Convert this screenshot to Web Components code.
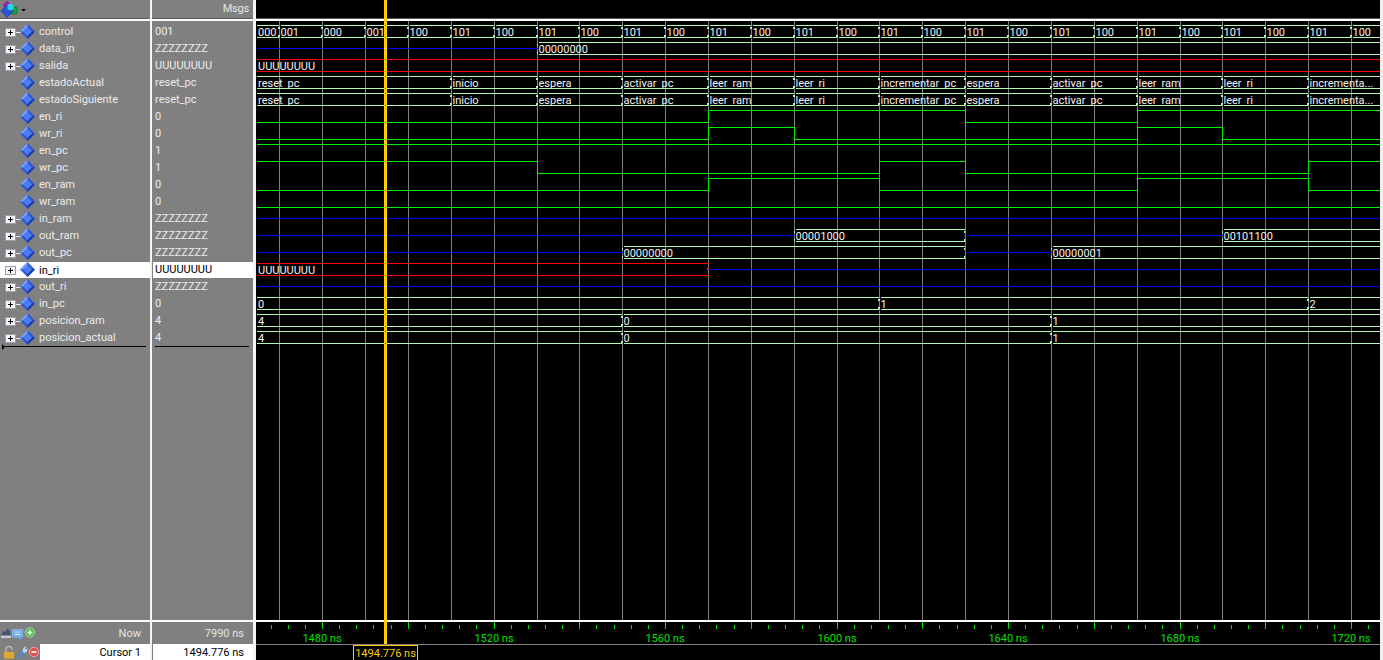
<!DOCTYPE html>
<html lang="en">
<head>
<meta charset="utf-8">
<title>Wave</title>
<style>
  html, body { margin: 0; padding: 0; height: 100%; background: #f0f0f0; overflow: hidden; }
  body { font: 11px Roboto, "Noto Sans", sans-serif; color: #ececec; }
</style>
</head>
<body>
<wave-window>
  <wave-column style="--w:150px;--rule:2px">
    <tool-icon slot="head" kind="layers"></tool-icon>
    <name-cell expandable>control</name-cell>
    <name-cell expandable>data_in</name-cell>
    <name-cell expandable>salida</name-cell>
    <name-cell>estadoActual</name-cell>
    <name-cell>estadoSiguiente</name-cell>
    <name-cell>en_ri</name-cell>
    <name-cell>wr_ri</name-cell>
    <name-cell>en_pc</name-cell>
    <name-cell>wr_pc</name-cell>
    <name-cell>en_ram</name-cell>
    <name-cell>wr_ram</name-cell>
    <name-cell expandable>in_ram</name-cell>
    <name-cell expandable>out_ram</name-cell>
    <name-cell expandable>out_pc</name-cell>
    <name-cell expandable selected>in_ri</name-cell>
    <name-cell expandable>out_ri</name-cell>
    <name-cell expandable>in_pc</name-cell>
    <name-cell expandable>posicion_ram</name-cell>
    <name-cell expandable>posicion_actual</name-cell>
    <list-end marker style="margin-left:5px;margin-right:4px"></list-end>
    <foot-row slot="foot" height="22" icons="a" >Now</foot-row>
    <foot-row slot="foot" height="16" icons="b" light>Cursor 1</foot-row>
  </wave-column>

  <wave-column style="--w:101px;--rule:3px">
    <head-label slot="head">Msgs</head-label>
    <value-cell>001</value-cell>
    <value-cell>ZZZZZZZZ</value-cell>
    <value-cell>UUUUUUUU</value-cell>
    <value-cell>reset_pc</value-cell>
    <value-cell>reset_pc</value-cell>
    <value-cell>0</value-cell>
    <value-cell>0</value-cell>
    <value-cell>1</value-cell>
    <value-cell>1</value-cell>
    <value-cell>0</value-cell>
    <value-cell>0</value-cell>
    <value-cell>ZZZZZZZZ</value-cell>
    <value-cell>ZZZZZZZZ</value-cell>
    <value-cell>ZZZZZZZZ</value-cell>
    <value-cell selected>UUUUUUUU</value-cell>
    <value-cell>ZZZZZZZZ</value-cell>
    <value-cell>0</value-cell>
    <value-cell>4</value-cell>
    <value-cell>4</value-cell>
    <list-end style="margin-left:3px;margin-right:4px"></list-end>
    <foot-row slot="foot" height="22" value>7990 ns</foot-row>
    <foot-row slot="foot" height="16" value light full>1494.776 ns</foot-row>
  </wave-column>

  <wave-column style="--w:1124px;--rule:0px;--bg:#000">
    <wave-plot></wave-plot>
    <time-axis slot="foot"></time-axis>
    <cursor-readout slot="foot">1494.776 ns</cursor-readout>
    <wave-cursor slot="overlay"></wave-cursor>
  </wave-column>
</wave-window>

<script>
const END = 1380, PX = 256, PY = 21;
const GRID = [279,322,365,408,451,494,537,579,622,665,708,751,794,837,879,922,965,1008,1051,1094,1137,1180,1222,1265,1308,1351];
const ctlXs = [256,279,322,365,408,451,494,537,579,622,665,708,751,794,837,879,922,965,1008,1051,1094,1137,1180,1222,1265,1308,1351,END];
const ctlLabels = ['000','001','000','001','100'];
for (let i = 5; i < ctlXs.length - 1; i++) ctlLabels.push(i % 2 ? '101' : '100');
const seg = (xs, labels) => xs.slice(0, -1).map((x, i) => ({ k: 'b', a: x, e: xs[i + 1], t: labels[i] }));
const st = seg([256,451,537,622,708,794,879,965,1051,1137,1222,1308,END],
  ['reset_pc','inicio','espera','activar_pc','leer_ram','leer_ri','incrementar_pc','espera','activar_pc','leer_ram','leer_ri','incrementa...']);
const Z = (a, e) => ({ k: 'z', a, e });
const U = (a, e, t) => ({ k: 'u', a, e, t });
const B = (a, e, t) => ({ k: 'b', a, e, t });
const L = (...p) => [{ k: 'l', p }];
const ROWS = [
  seg(ctlXs, ctlLabels),
  [Z(256,537), B(537,END,'00000000')],
  [U(256,END,'UUUUUUUU')],
  st, st,
  L(256,0,708,1,965,0,1137,1),
  L(256,0,708,1,794,0,1137,1,1222,0),
  L(256,1),
  L(256,1,537,0,879,1,965,0,1308,1),
  L(256,0,708,1,879,0,1137,1,1308,0),
  L(256,0),
  [Z(256,END)],
  [Z(256,794), B(794,965,'00001000'), Z(965,1222), B(1222,END,'00101100')],
  [Z(256,622), B(622,965,'00000000'), Z(965,1051), B(1051,END,'00000001')],
  [U(256,708,'UUUUUUUU'), Z(708,END)],
  [Z(256,END)],
  [B(256,879,'0'), B(879,1308,'1'), B(1308,END,'2')],
  [B(256,622,'4'), B(622,1051,'0'), B(1051,END,'1')],
  [B(256,622,'4'), B(622,1051,'0'), B(1051,END,'1')],
];
const PALE = '#b2f7b2', GREEN = '#00f000', RED = '#ff0000', BLUE = '#0000ff';
const CUR_X = 384;

function shadow(el, html) {
  const r = el.attachShadow({ mode: 'open' });
  r.innerHTML = html;
  return r;
}

class WaveWindow extends HTMLElement {
  connectedCallback() {
    if (this.shadowRoot) return;
    shadow(this, `<style>:host{display:flex;width:1383px;height:660px;background:#f0f0f0}</style><slot></slot>`);
  }
}
class WaveColumn extends HTMLElement {
  connectedCallback() {
    if (this.shadowRoot) return;
    shadow(this, `<style>
      :host{display:flex;flex-direction:column;position:relative;flex:none;box-sizing:content-box;
        width:var(--w);height:660px;border-right:var(--rule) solid #f4f4f4;background:var(--bg,#808080)}
      .head{height:18px;flex:none;border-bottom:1px solid #5a5a5a;display:flex;align-items:center}
      .rule{height:2px;flex:none;background:#fff}
      .body{flex:1;min-height:0;padding-top:2px;box-sizing:border-box;display:flex;flex-direction:column}
      .foot{height:38px;flex:none;display:flex;flex-direction:column}
    </style>
    <div class="head"><slot name="head"></slot></div><div class="rule"></div>
    <div class="body"><slot></slot></div><div class="rule"></div>
    <div class="foot"><slot name="foot"></slot></div><slot name="overlay"></slot>`);
  }
}
class ToolIcon extends HTMLElement {
  connectedCallback() {
    if (this.shadowRoot) return;
    shadow(this, `<style>:host{display:block;height:18px;width:30px}svg{display:block}</style>
    <svg width="30" height="18" viewBox="0 0 30 18">
      <path d="M7 1 L11 5 L7 9 L3 5 Z" fill="#b020c8" stroke="#7a1090" stroke-width=".6"/>
      <rect x="9" y="7" width="8" height="7" fill="#18a040" stroke="#0a6a28" stroke-width=".6"/>
      <path d="M7 5 L13 11 L7 17.5 L1 11 Z" fill="#2a55d8" stroke="#17308f" stroke-width=".6"/>
      <circle cx="10.5" cy="7" r="3.2" fill="#22d8e8"/>
      <path d="M21 9 L26 9 L23.5 11.5 Z" fill="#000"/>
    </svg>`);
  }
}
class HeadLabel extends HTMLElement {
  connectedCallback() {
    if (this.shadowRoot) return;
    shadow(this, `<style>:host{display:block;width:97px;text-align:right;color:#e6e6e6;font-size:11px;line-height:18px;letter-spacing:-.2px}</style><slot></slot>`);
  }
}
const DIAMOND = `<polygon points="27.5,1 35,8.5 27.5,16 20,8.5" fill="#2e55d6"/>
  <polygon points="27.5,1 20,8.5 23,8.5 27.5,4" fill="#7fa4f6"/>
  <polygon points="35,8.5 27.5,16 27.5,13 32,8.5" fill="#1b3aa6"/>
  <polygon points="27.5,4 32,8.5 27.5,13 23,8.5" fill="#4a7ef0"/>`;
const PLUS = `<path d="M15 9.5 H21" stroke="#dfe6f2" stroke-width="1"/>
  <rect x="5.5" y="5.5" width="10" height="8" fill="#f4f4f8" stroke="#9a9cb0"/>
  <path d="M8 9.5 H13 M10.5 7 V12" stroke="#000" stroke-width="1"/>`;
class NameCell extends HTMLElement {
  connectedCallback() {
    if (this.shadowRoot) return;
    shadow(this, `<style>
      :host{display:flex;align-items:center;height:17px;flex:none;box-sizing:border-box;white-space:nowrap;font-size:11px}
      :host([selected]){background:#fff;color:#000;border-top:1px solid #808080}
      svg{flex:none;display:block;margin-right:3px}
      :host([selected]) svg{margin-top:-1px}
    </style>
    <svg width="36" height="17" viewBox="0 0 36 17">${this.hasAttribute('expandable') ? PLUS : ''}${DIAMOND}</svg><slot></slot>`);
  }
}
class ValueCell extends HTMLElement {
  connectedCallback() {
    if (this.shadowRoot) return;
    shadow(this, `<style>
      :host{display:block;height:17px;line-height:17px;flex:none;box-sizing:border-box;padding-left:2px;margin-left:1px;white-space:nowrap;font-size:11px}
      :host([selected]){background:#fff;color:#000;border-top:1px solid #808080;line-height:16px}
    </style><slot></slot>`);
  }
}
class ListEnd extends HTMLElement {
  connectedCallback() {
    if (this.shadowRoot) return;
    shadow(this, `<style>
      :host{display:block;position:relative;height:0;border-top:1px solid #000;flex:none}
      .m{position:absolute;left:-3px;top:-3px;width:0;height:0;border-left:3px solid #000;border-top:3px solid transparent;border-bottom:3px solid transparent}
    </style>${this.hasAttribute('marker') ? '<div class="m"></div>' : ''}`);
  }
}
const ICONS = {
  a: `<svg width="38" height="22" viewBox="0 0 38 22">
      <path d="M1 14 L3 9 L5 10 L7 6.5 L10 9 L11 14 Z" fill="#46566f"/>
      <rect x="1" y="13.5" width="10" height="2.5" fill="#c4c8d2"/>
      <rect x="12.5" y="7.5" width="10" height="7.5" fill="#6aa6ea" stroke="#8dbcf0" stroke-width=".8"/>
      <path d="M14.5 10 H20.5 M14.5 12.5 H20.5" stroke="#e8f0fa" stroke-width="1"/>
      <path d="M17 15 L21 18 L21 15 Z" fill="#6aa6ea"/>
      <circle cx="30" cy="10.5" r="4.6" fill="#55bb55" stroke="#a8d8a8" stroke-width="1"/>
      <path d="M27.5 10.5 H32.5 M30 8 V13" stroke="#e8ffe8" stroke-width="1.4"/></svg>`,
  b: `<svg width="40" height="16" viewBox="0 0 40 16">
      <rect x="4" y="8" width="10" height="6.5" fill="#e0a838" stroke="#c49028" stroke-width=".6"/>
      <path d="M6 8 V5.5 A3 3 0 0 1 12 5.5" fill="none" stroke="#b8b8b8" stroke-width="1.4"/>
      <path d="M18 13.5 L24 7" stroke="#4f86d6" stroke-width="2.8" stroke-linecap="round"/>
      <path d="M22.5 7.5 L23.5 3.5 L26.5 2 L25 4.8 L26 5.8 L28 4 L27 7.5 L24.5 9 Z" fill="#c4d6f0"/>
      <circle cx="34" cy="8" r="4.6" fill="#e05050" stroke="#f0a0a0" stroke-width="1"/>
      <path d="M31.5 8 H36.5" stroke="#fff" stroke-width="1.6"/></svg>`
};
class FootRow extends HTMLElement {
  connectedCallback() {
    if (this.shadowRoot) return;
    const h = +this.getAttribute('height');
    const light = this.hasAttribute('light');
    const isVal = this.hasAttribute('value');
    const icons = this.getAttribute('icons');
    shadow(this, `<style>
      :host{display:flex;height:${h}px;flex:none;font-size:11px;white-space:nowrap}
      .ic{flex:none;width:${icons ? 40 : 0}px}
      svg{display:block;filter:blur(.25px)}
      .l{flex:1;text-align:right;line-height:${h + 2}px;padding-right:9px;
         ${light ? 'background:#fff;color:#000;' : 'color:#e6e6e6;'}${isVal ? 'margin-left:1px;' : ''}}
    </style>${icons ? `<div class="ic">${ICONS[icons]}</div>` : ''}<div class="l"><slot></slot></div>`);
  }
}
class WavePlot extends HTMLElement {
  connectedCallback() {
    if (this.shadowRoot) return;
    const X = x => x - PX + .5, Y = y => y - PY + .5;
    const label = t => t.split('_').join('<tspan fill="transparent">_</tspan>');
    const tx = a => a === 256 ? a - PX + 2 : a - PX + 1.5;
    let grid = '', text = '', lines = '', defs = '';
    GRID.forEach(x => grid += `<path d="M${X(x)} 0 V599" stroke="#808080"/>`);
    ROWS.forEach((segs, i) => {
      const top = 25 + 17 * i, bot = 37 + 17 * i, mid = 31 + 17 * i, base = 36 + 17 * i - PY;
      defs += `<clipPath id="c${i}"><rect x="0" y="${top - PY + 1}" width="1124" height="${bot - top - 1}"/></clipPath>`;
      segs.forEach(s => {
        if (s.k === 'z') lines += `<path d="M${X(s.a + 1)} ${Y(mid)} H${X(s.e)}" stroke="${BLUE}"/>`;
        if (s.k === 'u') {
          lines += `<path d="M${X(s.a)} ${Y(top)} H${X(s.e)} M${X(s.a)} ${Y(bot)} H${X(s.e)}" stroke="${RED}"/>`;
          text += `<text x="${tx(s.a)}" y="${base}" clip-path="url(#c${i})">${s.t}</text>`;
        }
        if (s.k === 'b') {
          const a = s.a, e = s.e;
          let d = '';
          const l = a === 256 ? a : a + 1, r = e >= END ? e : e - 1;
          d += `M${X(l)} ${Y(top)} H${X(r)} M${X(l)} ${Y(bot)} H${X(r)}`;
          if (a !== 256) d += ` M${X(a)} ${Y(top + 1)} V${Y(top + 3)} M${X(a)} ${Y(bot - 3)} V${Y(bot - 1)}`;
          if (e < END) d += ` M${X(e - 1)} ${Y(top + 1)} V${Y(top + 3)} M${X(e - 1)} ${Y(bot - 3)} V${Y(bot - 1)}`;
          lines += `<path d="${d}" stroke="${PALE}"/>`;
          text += `<text x="${tx(a)}" y="${base}" clip-path="url(#c${i})">${label(s.t)}</text>`;
        }
        if (s.k === 'l') {
          let d = '', p = s.p, prev = null;
          for (let j = 0; j < p.length; j += 2) {
            const x = p[j], y = p[j + 1] ? top : bot, nx = j + 2 < p.length ? p[j + 2] : END;
            d += (prev === null ? `M${X(x)} ${Y(y)}` : ` V${Y(y)}`) + ` H${X(nx)}`;
            prev = y;
          }
          lines += `<path d="${d}" stroke="${GREEN}" fill="none"/>`;
        }
      });
    });
    lines += `<rect x="${708 - PX - 1}" y="${269 - PY - 1}" width="2" height="2" fill="#ff2020"/>`;
    shadow(this, `<style>
      :host{display:block;width:1124px;height:599px;margin-top:-2px;flex:none}
      svg{display:block}
      text{font:11px Roboto,"Noto Sans",sans-serif;fill:#f2f2f2}
      path{shape-rendering:crispEdges;fill:none}
    </style>
    <svg width="1124" height="599" viewBox="0 0 1124 599"><defs>${defs}</defs>${grid}${text}${lines}</svg>`);
  }
}
class TimeAxis extends HTMLElement {
  connectedCallback() {
    if (this.shadowRoot) return;
    let d = '', labels = '';
    const step = 85.75 / 5;
    for (let k = -3; ; k++) {
      const x = 322 + k * step;
      if (x > END) break;
      const major = ((k % 5) + 5) % 5 === 0;
      const px = Math.round(x) - PX + .5;
      d += major ? `M${px} 0 V7 ` : `M${px} 3 V7 `;
    }
    [['1480',322],['1520',494],['1560',665],['1600',837],['1640',1008],['1680',1180],['1720',1351]].forEach(([t, x]) => {
      labels += `<text x="${x - PX}" y="20" text-anchor="middle">${t} ns</text>`;
    });
    shadow(this, `<style>
      :host{display:block;height:22px;flex:none;border-bottom:1px solid #808080}
      svg{display:block}
      text{font:11px Roboto,"Noto Sans",sans-serif;fill:#00e000}
    </style><svg width="1124" height="22" viewBox="0 0 1124 22">
      <path d="${d}" stroke="#00e000" fill="none" shape-rendering="crispEdges"/>${labels}</svg>`);
  }
}
class CursorReadout extends HTMLElement {
  connectedCallback() {
    if (this.shadowRoot) return;
    shadow(this, `<style>
      :host{display:block;flex:none;box-sizing:border-box;width:65px;height:15px;margin-left:97px;
        border:1px solid #ffcc00;border-bottom:0;color:#ffcc00;font-size:11px;line-height:15px;text-align:center;white-space:nowrap}
    </style><slot></slot>`);
  }
}
class WaveCursor extends HTMLElement {
  connectedCallback() {
    if (this.shadowRoot) return;
    let dots = '';
    const xor = { pale: '#4d33b2', green: '#ff3c00', red: '#00cc00', blue: '#ffccff' };
    ROWS.forEach((segs, i) => {
      const top = 25 + 17 * i, bot = 37 + 17 * i, mid = 31 + 17 * i;
      const s = segs.find(g => g.k === 'l' || (g.a <= CUR_X && g.e > CUR_X));
      const dot = (y, c) => dots += `<rect x="1" y="${y}" width="1" height="1" fill="${c}"/>`;
      if (s.k === 'b') { dot(top, xor.pale); dot(bot, xor.pale); }
      if (s.k === 'u') { dot(top, xor.red); dot(bot, xor.red); }
      if (s.k === 'z') dot(mid, xor.blue);
      if (s.k === 'l') dot(s.p[1] ? top : bot, xor.green);
    });
    shadow(this, `<style>
      :host{position:absolute;left:${CUR_X - PX}px;top:0;width:3px;height:644px}
      svg{display:block}
    </style><svg width="3" height="644" viewBox="0 0 3 644"><rect width="3" height="644" fill="#ffcc00"/>${dots}</svg>`);
  }
}
[['wave-window',WaveWindow],['wave-column',WaveColumn],['tool-icon',ToolIcon],['head-label',HeadLabel],
 ['name-cell',NameCell],['value-cell',ValueCell],['list-end',ListEnd],['foot-row',FootRow],
 ['wave-plot',WavePlot],['time-axis',TimeAxis],['cursor-readout',CursorReadout],['wave-cursor',WaveCursor]]
 .forEach(([n,c]) => customElements.define(n,c));
</script>
</body>
</html>
